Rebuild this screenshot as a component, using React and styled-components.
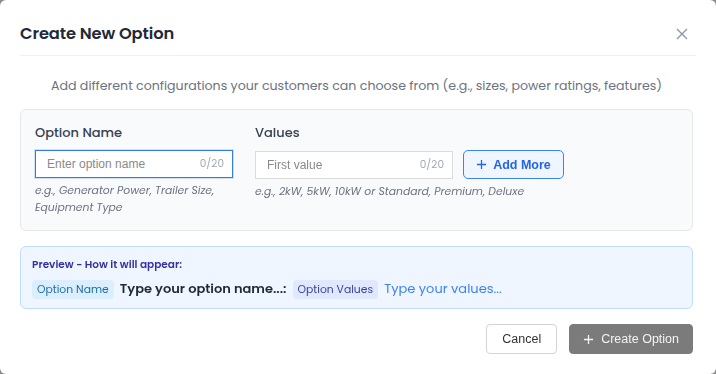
import React from 'react'
import styled, { createGlobalStyle } from 'styled-components'

const GlobalStyle = createGlobalStyle`
  html, body { margin: 0; padding: 0; background: #8c8c8c; }
  * { box-sizing: border-box; }
`

const font = `"Poppins", "Open Sans", "Liberation Sans", sans-serif`
const sysFont = `"Liberation Sans", Arial, sans-serif`

const Dialog = styled.div`
  width: 716px;
  height: 374px;
  background: #fff;
  border-radius: 6px;
  font-family: ${font};
  padding: 0 23px 0 20px;
  display: flex;
  flex-direction: column;
`

const Header = styled.div`
  height: 56px;
  display: flex;
  align-items: center;
  justify-content: space-between;
  border-bottom: 1px solid #eef0f3;
  padding-top: 12px;
  margin-right: -3px;
`

const Title = styled.h2`
  margin: 0;
  font-size: 16.3px;
  font-weight: 600;
  color: #1f2937;
  letter-spacing: -0.1px;
`

const CloseBtn = styled.button`
  border: none;
  background: none;
  padding: 0;
  width: 16px;
  height: 16px;
  display: flex;
  align-items: center;
  justify-content: center;
  margin-right: 6px;
  color: #8a94a6;
`

const Subtitle = styled.p`
  margin: 0;
  height: 53px;
  display: flex;
  align-items: center;
  justify-content: center;
  font-size: 12.6px;
  color: #6b7280;
  padding: 6px 0 0 0;
`

const Section = styled.div`
  background: #f9fafb;
  border: 1px solid #e5e7eb;
  border-radius: 6px;
  padding: 14px 14px 12px;
  display: flex;
  gap: 22px;
  height: 122px;
`

const Field = styled.div`
  display: flex;
  flex-direction: column;
  width: ${p => p.$w}px;
`

const Label = styled.label`
  font-size: 13px;
  font-weight: 500;
  color: #374151;
  margin-bottom: 8px;
  line-height: 18px;
`

const InputRow = styled.div`
  display: flex;
  gap: 10px;
  align-items: center;
`

const InputBox = styled.div`
  width: 198px;
  height: 28px;
  display: flex;
  align-items: center;
  justify-content: space-between;
  background: #fff;
  border: 1px solid ${p => (p.$focus ? '#2f7de1' : '#dcdcdc')};
  box-shadow: ${p => (p.$focus ? '0 0 0 1px #cfe2fb' : 'none')};
  padding: 0 8px 0 11px;
`

const Input = styled.input`
  border: none;
  outline: none;
  background: transparent;
  font-family: ${sysFont};
  font-size: 12px;
  width: 130px;
  color: #374151;
  padding: 0;
  &::placeholder { color: #8a8a8a; }
`

const Counter = styled.span`
  font-size: 10.5px;
  color: #a3a9b3;
`

const AddButton = styled.button`
  height: 29px;
  width: 101px;
  background: #eff6ff;
  border: 1px solid #3b82f6;
  border-radius: 5px;
  color: #2563eb;
  font-family: ${sysFont};
  font-weight: 700;
  font-size: 12.5px;
  display: flex;
  align-items: center;
  justify-content: center;
  gap: 6px;
  padding: 0;
`

const Hint = styled.p`
  margin: 4px 0 0;
  font-size: 10.8px;
  font-style: italic;
  color: #6b7280;
  line-height: 17px;
`

const Preview = styled.div`
  margin-top: 15px;
  background: #eff6ff;
  border: 1px solid #bfdbfe;
  border-radius: 6px;
  padding: 10px 11px 0;
  height: 63px;
`

const PreviewTitle = styled.div`
  font-size: 10.5px;
  font-weight: 600;
  color: #3730a3;
  line-height: 16px;
`

const PreviewRow = styled.div`
  display: flex;
  align-items: center;
  gap: 6px;
  margin-top: 6px;
`

const Chip = styled.span`
  font-size: 10.8px;
  padding: 2px 5px;
  border-radius: 4px;
  background: ${p => p.$bg};
  color: ${p => p.$color};
  line-height: 15px;
`

const PreviewName = styled.span`
  font-size: 13px;
  font-weight: 600;
  color: #1f2937;
`

const PreviewValues = styled.span`
  font-size: 13px;
  color: #3b82f6;
`

const Footer = styled.div`
  display: flex;
  justify-content: flex-end;
  gap: 12px;
  margin-top: 15px;
`

const Button = styled.button`
  height: 30px;
  padding: 0 ${p => (p.$primary ? 13 : 15)}px;
  border-radius: 4px;
  font-family: ${sysFont};
  font-size: 12.5px;
  display: flex;
  align-items: center;
  gap: 7px;
  background: ${p => (p.$primary ? '#7b7b7b' : '#fff')};
  color: ${p => (p.$primary ? '#f3f3f3' : '#333')};
  border: 1px solid ${p => (p.$primary ? '#7b7b7b' : '#d4d4d4')};
`

const Plus = ({ size = 12 }) => (
  <svg width={size} height={size} viewBox="0 0 12 12" fill="none" stroke="currentColor" strokeWidth="1.4">
    <path d="M6 1v10M1 6h10" />
  </svg>
)

export default function App() {
  return (
    <>
      <GlobalStyle />
      <Dialog>
        <Header>
          <Title>Create New Option</Title>
          <CloseBtn aria-label="close">
            <svg width="12" height="12" viewBox="0 0 12 12" stroke="currentColor" strokeWidth="1.3">
              <path d="M1 1l10 10M11 1L1 11" />
            </svg>
          </CloseBtn>
        </Header>
        <Subtitle>
          Add different configurations your customers can choose from (e.g., sizes, power ratings, features)
        </Subtitle>
        <Section>
          <Field $w={198}>
            <Label>Option Name</Label>
            <InputBox $focus>
              <Input placeholder="Enter option name" autoFocus />
              <Counter>0/20</Counter>
            </InputBox>
            <Hint>e.g., Generator Power, Trailer Size, Equipment Type</Hint>
          </Field>
          <Field $w={330}>
            <Label>Values</Label>
            <InputRow>
              <InputBox>
                <Input placeholder="First value" />
                <Counter>0/20</Counter>
              </InputBox>
              <AddButton>
                <Plus size={11} />
                Add More
              </AddButton>
            </InputRow>
            <Hint>e.g., 2kW, 5kW, 10kW or Standard, Premium, Deluxe</Hint>
          </Field>
        </Section>
        <Preview>
          <PreviewTitle>Preview - How it will appear:</PreviewTitle>
          <PreviewRow>
            <Chip $bg="#dbeefe" $color="#1e6ea6">Option Name</Chip>
            <PreviewName>Type your option name...:</PreviewName>
            <Chip $bg="#dfe8fd" $color="#3b3f9a">Option Values</Chip>
            <PreviewValues>Type your values...</PreviewValues>
          </PreviewRow>
        </Preview>
        <Footer>
          <Button>Cancel</Button>
          <Button $primary>
            <Plus size={11} />
            Create Option
          </Button>
        </Footer>
      </Dialog>
    </>
  )
}
